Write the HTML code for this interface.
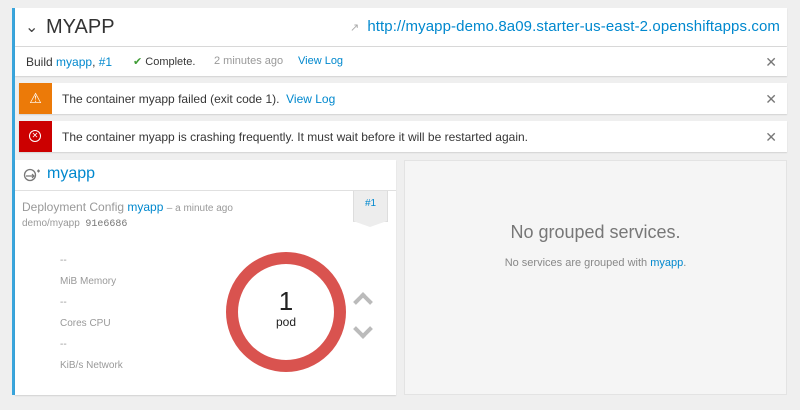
<!DOCTYPE html>
<html><head><style>
body{margin:0;width:800px;height:410px;background:#efefef;font-family:"Liberation Sans",sans-serif;position:relative;overflow:hidden;color:#363636}
.a{position:absolute}
a{color:#0088ce;text-decoration:none}
.w{background:#fff;box-shadow:0 1px 1px rgba(0,0,0,.12)}
.x{position:absolute;right:10px;top:50%;margin-top:-8px;font-size:14px;color:#777;line-height:16px}
.g{color:#999}
</style></head><body>
<div class="a" style="left:12px;top:8px;width:3px;height:387px;background:#39a5dc"></div>
<div class="a w" style="left:15px;top:8px;width:772px;height:38px">
 <span class="a" style="left:10px;top:9px;font-size:16px;color:#444">&#8964;</span>
 <span class="a" style="left:31px;top:8px;font-size:20px;color:#333">MYAPP</span>
 <span class="a" style="left:335px;top:13px;font-size:11px;color:#aaa">&#8599;</span>
 <a class="a" style="right:7px;top:10px;font-size:15px;white-space:nowrap;letter-spacing:0.1px">http://myapp-demo.8a09.starter-us-east-2.openshiftapps.com</a>
</div>
<div class="a w" style="left:15px;top:47px;width:772px;height:29px;font-size:12px">
 <span class="a" style="left:11px;top:8px">Build <a>myapp</a>, <a>#1</a></span>
 <span class="a" style="left:118px;top:8px;font-size:11px"><span style="color:#3f9c35">&#10004;</span> Complete.</span>
 <span class="a g" style="left:199px;top:8px;font-size:11px">2 minutes ago</span>
 <a class="a" style="left:283px;top:8px;font-size:11px">View Log</a>
 <span class="x">&#10005;</span>
</div>
<div class="a w" style="left:19px;top:83px;width:768px;height:31px;font-size:12px">
 <div class="a" style="left:0;top:0;width:33px;height:31px;background:#ec7a08;color:#fff;text-align:center;line-height:31px;font-size:14px">&#9888;</div>
 <span class="a" style="left:43px;top:9px">The container myapp failed (exit code 1). &nbsp;<a>View Log</a></span>
 <span class="x">&#10005;</span>
</div>
<div class="a w" style="left:19px;top:121px;width:768px;height:31px;font-size:12px">
 <div class="a" style="left:0;top:0;width:33px;height:31px;background:#cc0000"><div class="a" style="left:10px;top:9px;width:10px;height:10px;border:1.5px solid #fff;border-radius:50%;color:#fff;font-size:8px;line-height:10px;text-align:center">&#10005;</div></div>
 <span class="a" style="left:43px;top:9px">The container myapp is crashing frequently. It must wait before it will be restarted again.</span>
 <span class="x">&#10005;</span>
</div>
<div class="a w" style="left:15px;top:160px;width:381px;height:235px">
 <svg class="a" style="left:8px;top:8px" width="18" height="14" viewBox="0 0 18 14"><circle cx="7" cy="7" r="5.5" fill="none" stroke="#777" stroke-width="1.3"/><path d="M3 8h8M9 6l2 2-2 2M14 3h3M15.5 1.5v3" stroke="#777" stroke-width="1.2" fill="none"/></svg>
 <a class="a" style="left:32px;top:5px;font-size:16px">myapp</a>
 <div class="a" style="left:0;top:30px;width:381px;height:1px;background:#e0e0e0"></div>
 <span class="a g" style="left:7px;top:40px;font-size:12px">Deployment Config <a>myapp</a> <span style="font-size:10px">– a minute ago</span></span>
 <span class="a g" style="left:7px;top:58px;font-size:10px">demo/myapp &nbsp;<b style="font-family:'Liberation Mono',monospace;font-weight:normal;color:#777">91e6686</b></span>
 <div class="a" style="left:338px;top:31px;width:33px;height:30px;background:#ededed;border:1px solid #ddd;border-top:0;font-size:10px;text-align:center;line-height:26px"><a>#1</a></div>
 <div class="a" style="left:338px;top:61px;width:0;height:0;border-left:17px solid transparent;border-right:17px solid transparent;border-top:6px solid #ededed"></div>
 <div class="a g" style="left:45px;top:90px;font-size:10px;line-height:21px">--<br>MiB Memory<br>--<br>Cores CPU<br>--<br>KiB/s Network</div>
 <div class="a" style="left:211px;top:92px;width:96px;height:96px;border:12px solid #d9534f;border-radius:50%;text-align:center">
  <div style="font-size:26px;color:#222;margin-top:23px;line-height:28px">1</div>
  <div style="font-size:12px;color:#222">pod</div>
 </div>
 <div class="a" style="left:341px;top:135px;width:10px;height:10px;border-left:4px solid #bbb;border-top:4px solid #bbb;transform:rotate(45deg)"></div>
 <div class="a" style="left:341px;top:162px;width:10px;height:10px;border-right:4px solid #bbb;border-bottom:4px solid #bbb;transform:rotate(45deg)"></div>
</div>
<div class="a" style="left:404px;top:160px;width:381px;height:233px;background:#f5f5f5;border:1px solid #e3e3e3;text-align:center">
 <div style="margin-top:61px;font-size:18px;color:#777">No grouped services.</div>
 <div style="margin-top:14px;font-size:11px;color:#888">No services are grouped with <a>myapp</a>.</div>
</div>
</body></html>
